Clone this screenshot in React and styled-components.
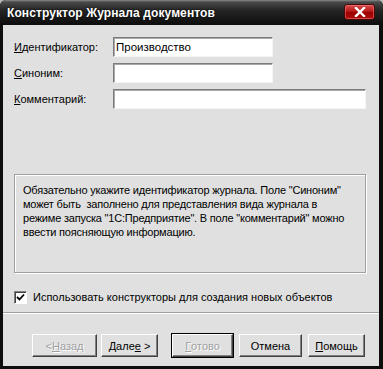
import styled, { createGlobalStyle } from 'styled-components';

const Global = createGlobalStyle`
  html, body {
    margin: 0;
    padding: 0;
    background: #b8b8b8;
  }
  body {
    font-family: "Liberation Sans", Arial, sans-serif;
    font-size: 11px;
  }
`

const Window = styled.div`
  width: 383px;
  height: 369px;
  box-sizing: border-box;
  display: flex;
  flex-direction: column;
  background: #0e0e0e;
  border-radius: 6px 6px 0 0;
  overflow: hidden;
`

const TitleBar = styled.div`
  height: 25px;
  flex: none;
  display: flex;
  align-items: center;
  justify-content: space-between;
  padding: 0 8px 0 7px;
  background: linear-gradient(#8c8c8c 0px, #4a4a4a 2px, #262626 10px, #0c0c0c 25px);
`

const Title = styled.span`
  color: #fff;
  font-weight: bold;
  font-size: 12px;
  letter-spacing: 0.1px;
  text-shadow: 0 0 2px #000;
  margin-top: 1px;
`

const CloseButton = styled.div`
  width: 31px;
  height: 16px;
  margin-top: -1px;
  box-sizing: border-box;
  border: 1px solid #4a0808;
  border-radius: 3px;
  background: linear-gradient(#d85050 0%, #b81818 45%, #9a0000 55%, #b01010 100%);
  box-shadow: inset 0 0 0 1px rgba(255, 140, 140, 0.45);
  display: flex;
  align-items: center;
  justify-content: center;
`

const Body = styled.div`
  flex: 1;
  margin: 0 4px 3px 3px;
  background: #e0e0e0;
  display: flex;
  flex-direction: column;
`

const Form = styled.div`
  padding: 12px 0 0 11px;
  display: flex;
  flex-direction: column;
  gap: 6px;
`

const Row = styled.div`
  display: flex;
  align-items: center;
  height: 20px;
`

const Label = styled.span`
  width: 99px;
  flex: none;
  color: #000;
`

const Key = styled.span`
  text-decoration: underline;
  text-underline-offset: 1px;
`

const Field = styled.div`
  width: ${p => p.$w}px;
  height: 20px;
  box-sizing: border-box;
  background: #fff;
  border: 1px solid;
  border-color: #7c7c7c #f4f4f4 #f4f4f4 #7c7c7c;
  box-shadow: inset 1px 1px 0 #a8a8a8;
  padding: 0 2px;
  display: flex;
  align-items: center;
  color: #000;
  font-size: 11.5px;
`

const Info = styled.div`
  margin: 65px 13px 0 11px;
  height: 99px;
  box-sizing: border-box;
  border: 1px solid #a0a0a0;
  box-shadow: 1px 1px 0 #fff, inset 1px 1px 0 #fff;
  padding: 8px 4px 0 8px;
  line-height: 14px;
  color: #000;
  font-size: 11px;
  letter-spacing: -0.2px;
  white-space: nowrap;
`

const CheckRow = styled.label`
  margin: 17px 0 0 11px;
  display: flex;
  align-items: center;
  gap: 6px;
  height: 14px;
  color: #000;
`

const CheckBox = styled.span`
  width: 13px;
  height: 13px;
  box-sizing: border-box;
  background: #fff;
  border: 1px solid;
  border-color: #808080 #fff #fff #808080;
  box-shadow: inset 1px 1px 0 #404040;
  display: flex;
  align-items: center;
  justify-content: center;
`

const Separator = styled.div`
  margin-top: 8px;
  height: 1px;
  background: #a0a0a0;
  border-bottom: 1px solid #fff;
`

const Buttons = styled.div`
  margin: 20px 0 0 29px;
  display: flex;
  align-items: center;
`

const Button = styled.div`
  width: ${p => p.$w}px;
  height: 23px;
  margin-left: ${p => p.$gap || 0}px;
  box-sizing: border-box;
  background: #e0e0e0;
  border: 1px solid;
  border-color: #fff #404040 #404040 #fff;
  box-shadow: inset -1px -1px 0 #808080;
  outline: ${p => (p.$default ? '1px solid #000' : 'none')};
  display: flex;
  align-items: center;
  justify-content: center;
  color: ${p => (p.$disabled ? '#a0a0a0' : '#000')};
  text-shadow: ${p => (p.$disabled ? '1px 1px 0 #fff' : 'none')};
  font-size: 11px;
`

const Cross = () => (
  <svg width="12" height="10" viewBox="0 0 12 10">
    <path d="M2 1 L10 9 M10 1 L2 9" stroke="#fff" strokeWidth="2.4" strokeLinecap="square" />
  </svg>
)

const Check = () => (
  <svg width="9" height="9" viewBox="0 0 9 9">
    <path d="M1 4 L3.5 6.5 L8 1.5" fill="none" stroke="#000" strokeWidth="1.8" />
  </svg>
)

const App = () => {
  return (
    <>
      <Global />
      <Window>
        <TitleBar>
          <Title>Конструктор Журнала документов</Title>
          <CloseButton><Cross /></CloseButton>
        </TitleBar>
        <Body>
          <Form>
            <Row>
              <Label><Key>И</Key>дентификатор:</Label>
              <Field $w={160}>Производство</Field>
            </Row>
            <Row>
              <Label><Key>С</Key>иноним:</Label>
              <Field $w={160} />
            </Row>
            <Row>
              <Label><Key>К</Key>омментарий:</Label>
              <Field $w={253} />
            </Row>
          </Form>
          <Info>
            Обязательно укажите идентификатор журнала. Поле "Синоним"<br />
            может быть&nbsp; заполнено для представления вида журнала в<br />
            режиме запуска "1С:Предприятие". В поле "комментарий" можно<br />
            ввести поясняющую информацию.
          </Info>
          <CheckRow>
            <CheckBox><Check /></CheckBox>
            Использовать конструкторы для создания новых объектов
          </CheckRow>
          <Separator />
          <Buttons>
            <Button $w={65} $disabled>&lt; <Key>Н</Key>азад</Button>
            <Button $w={57} $gap={4}>Дале<Key>е</Key>&nbsp;&gt;</Button>
            <Button $w={61} $gap={14} $default $disabled><Key>Г</Key>отово</Button>
            <Button $w={63} $gap={6}>Отмена</Button>
            <Button $w={57} $gap={6}><Key>П</Key>омощь</Button>
          </Buttons>
        </Body>
      </Window>
    </>
  );
};

export default App;
